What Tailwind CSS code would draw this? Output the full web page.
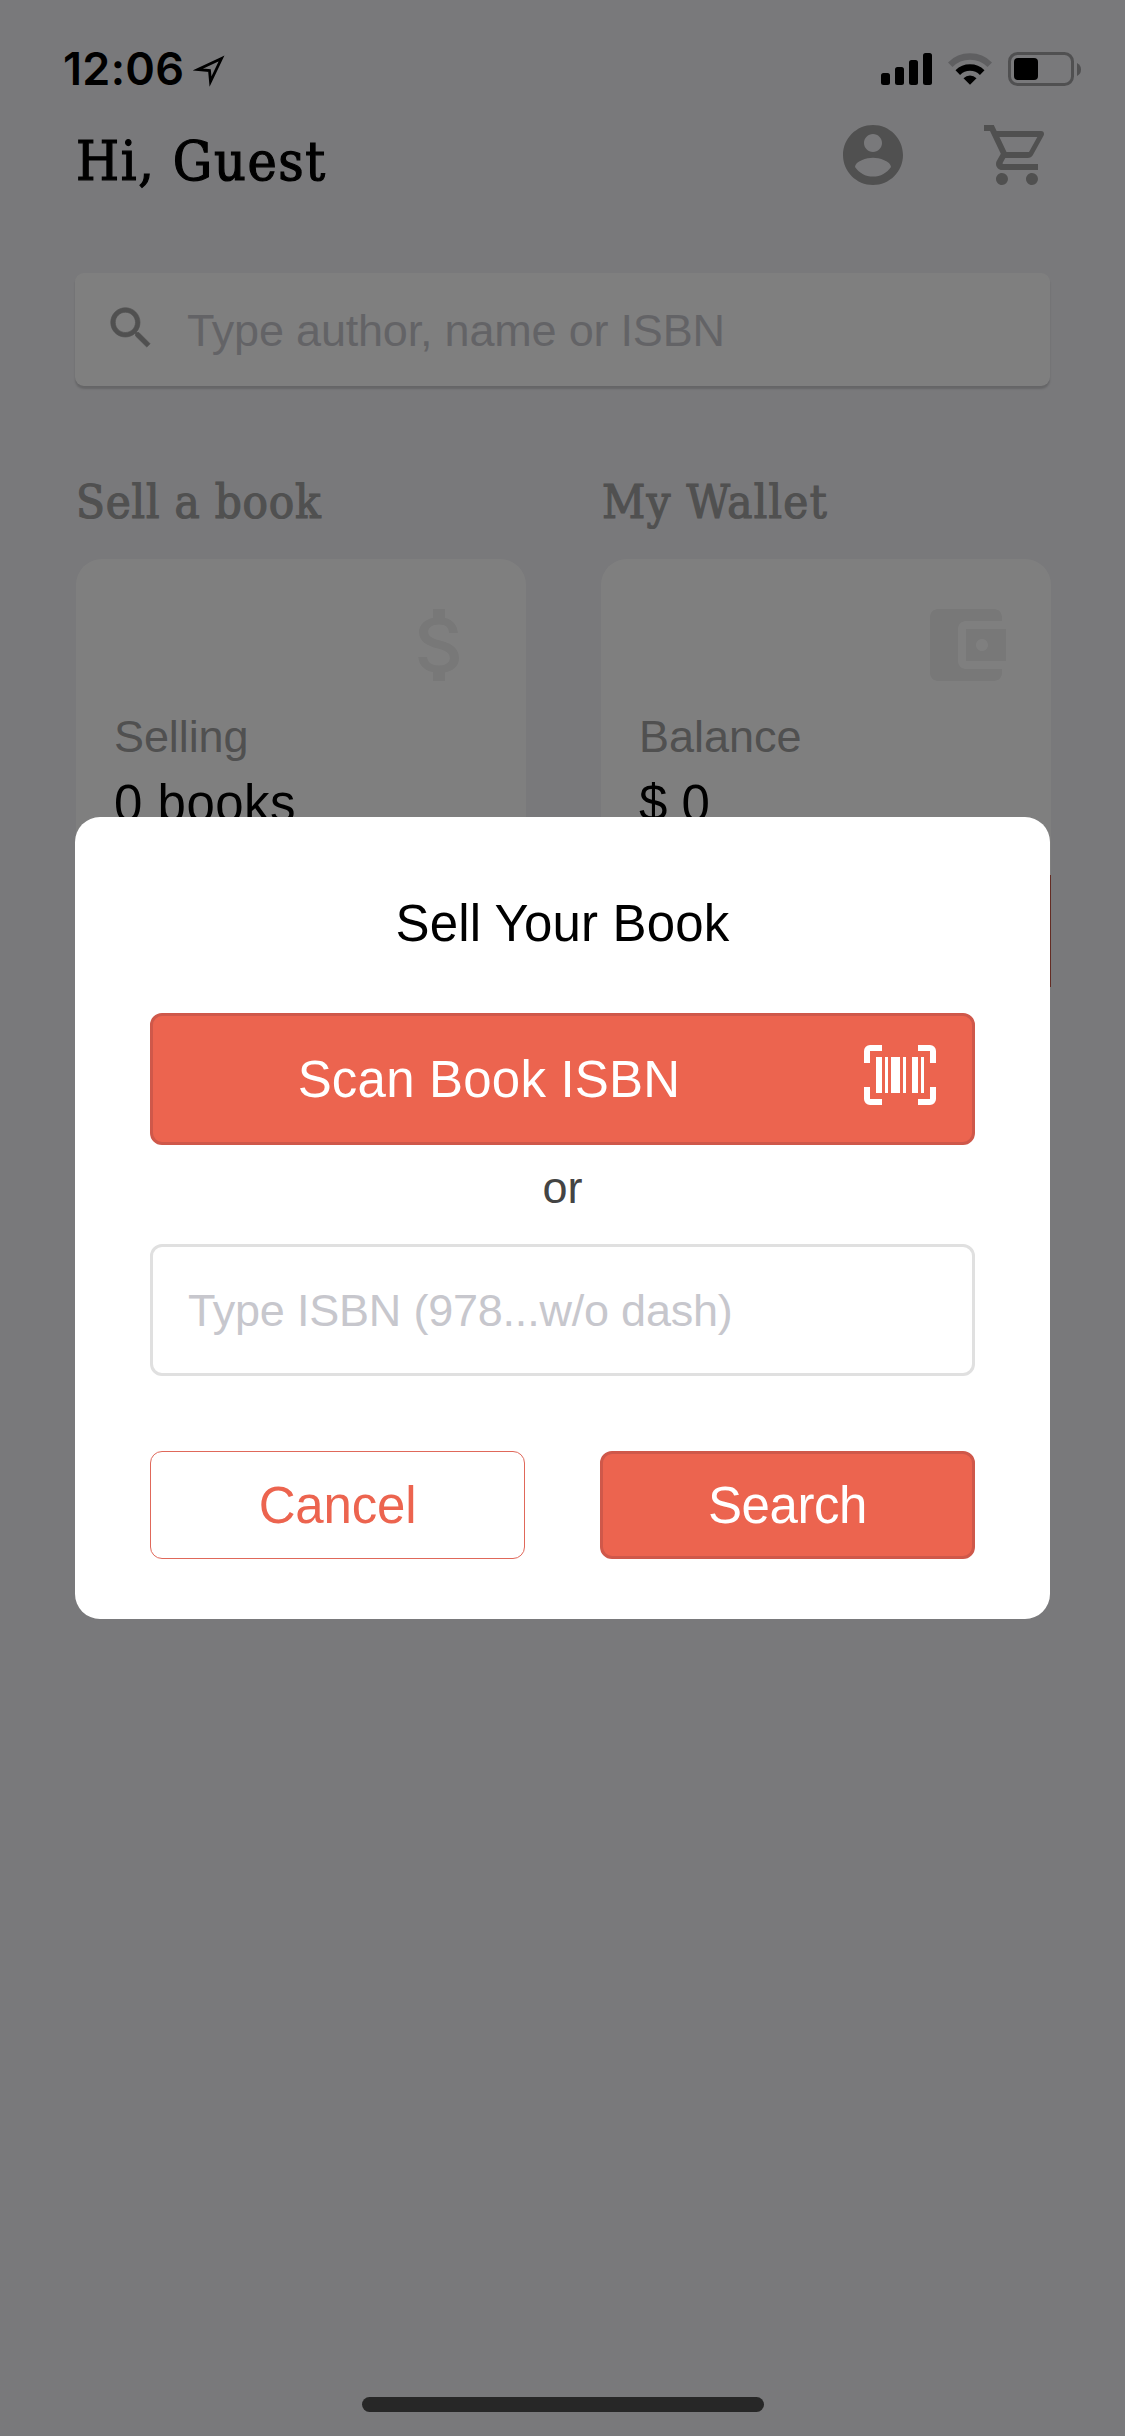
<!DOCTYPE html>
<html lang="en">
<head>
<meta charset="utf-8">
<title>Sell Your Book</title>
<script src="https://cdn.jsdelivr.net/npm/@tailwindcss/browser@4"></script>
</head>
<body class="w-[1125px] h-[2436px] overflow-hidden">
<div class="relative w-[1125px] h-[2436px] overflow-hidden bg-[#f2f2f6] font-['Liberation_Sans',sans-serif] text-black">

  <!-- Home screen -->
  <div class="flex h-full flex-col">
    <div class="flex h-[119px] items-start justify-between pl-[63px] pr-[44px] pt-[49px]">
      <div class="flex items-center gap-[9px]">
        <span class="font-['Inter',sans-serif] text-[45px] leading-[40px] font-semibold tracking-[0.3px]">12:06</span>
        <svg class="mt-[4px] h-[34px] w-[34px]" viewBox="0 0 34 34" fill="none" stroke="black" stroke-width="2.800"><path d="M28.5 4.500 L5 15.500 L16.500 16.500 L17.500 27.500 Z" stroke-miterlimit="6"/></svg>
      </div>
      <div class="flex items-start pt-[3px]">
        <svg class="mt-[1px] h-[33px] w-[51px]" viewBox="0 0 51 33"><rect x="0" y="20" width="9" height="12" rx="2.5"/><rect x="14" y="14" width="9" height="18" rx="2.5"/><rect x="28" y="7" width="9" height="25" rx="2.5"/><rect x="42" y="0" width="9" height="32" rx="2.5"/></svg>
        <svg class="ml-[16px] h-[34px] w-[44px]" viewBox="0 0 44 34" fill="none"><path d="M2.2 12.8 A28 28 0 0 1 41.8 12.8" stroke="#bebec2" stroke-width="6.5"/><path d="M9.8 20.6 A17.3 17.3 0 0 1 34.2 20.6" stroke="black" stroke-width="6.5"/><path d="M15.5 26.3 A9.2 9.2 0 0 1 28.5 26.3 L22 32.8Z" fill="black"/></svg>
        <svg class="ml-[16px] h-[34px] w-[73px]" viewBox="0 0 73 34"><rect x="1.5" y="1.5" width="63" height="31" rx="8" fill="none" stroke="#a0a0a3" stroke-width="3"/><rect x="6" y="6" width="24" height="22" rx="4"/><path d="M69 11 Q73 13 73 17.500 Q73 22 69 24Z" fill="#a0a0a3"/></svg>
      </div>
    </div>

    <div class="flex h-[84px] items-start justify-between pl-[76px] pr-[72px]">
      <h1 class="font-['DejaVu_Serif_Condensed','DejaVu_Serif',serif] text-[55px] leading-[84px] tracking-[1.6px] [-webkit-text-stroke:1.2px_black]">Hi, Guest</h1>
      <div class="flex gap-[72px] text-[#a0a0a0]">
        <svg class="size-[72px]" viewBox="0 0 24 24" fill="currentColor"><path d="M12 2C6.48 2 2 6.48 2 12s4.48 10 10 10 10-4.480 10-10S17.520 2 12 2zm0 3c1.660 0 3 1.340 3 3s-1.340 3-3 3-3-1.340-3-3 1.340-3 3-3zm0 14.200c-2.500 0-4.710-1.280-6-3.220.03-1.990 4-3.080 6-3.080 1.990 0 5.970 1.090 6 3.080-1.290 1.940-3.500 3.220-6 3.220z"/></svg>
        <svg class="size-[72px]" viewBox="0 0 24 24" fill="currentColor"><path d="M17,18A2,2 0 0,1 19,20A2,2 0 0,1 17,22C15.89,22 15,21.1 15,20C15,18.89 15.89,18 17,18M1,2H4.27L5.21,4H20A1,1 0 0,1 21,5C21,5.17 20.95,5.34 20.88,5.5L17.3,11.97C16.96,12.58 16.3,13 15.55,13H8.1L7.2,14.63L7.17,14.75A0.25,0.25 0 0,0 7.42,15H19V17H7C5.89,17 5,16.1 5,15C5,14.65 5.09,14.32 5.24,14.04L6.6,11.59L3,4H1V2M7,18A2,2 0 0,1 9,20A2,2 0 0,1 7,22C5.89,22 5,21.1 5,20C5,18.89 5.89,18 7,18M16,11L18.78,6H6.14L8.5,11H16Z"/></svg>
      </div>
    </div>

    <div class="mx-[75px] mt-[70px] flex h-[113px] items-center gap-[29px] rounded-[9px] bg-white pl-[29px] shadow-[0_3px_2px_rgba(0,0,0,0.16)]">
      <svg class="-mt-[4px] size-[54px]" viewBox="0 0 24 24" fill="#a0a0a0" stroke="#a0a0a0" stroke-width="0.3"><path d="M15.500 14h-.79l-.28-.27C15.410 12.590 16 11.110 16 9.500 16 5.910 13.090 3 9.500 3S3 5.910 3 9.500 5.910 16 9.500 16c1.610 0 3.090-.59 4.230-1.570l.27.28v.79l5 4.990L20.490 19l-4.990-5zm-6 0C7.010 14 5 11.990 5 9.500S7.010 5 9.500 5 14 7.010 14 9.500 11.990 14 9.500 14z"/></svg>
      <span class="mt-[2px] text-[45px] leading-[60px] tracking-[-0.2px] text-[#c7c7cd]">Type author, name or ISBN</span>
    </div>

    <div class="mt-[86px] grid grid-cols-2 gap-x-[75px] pl-[76px] pr-[74px]">
      <section>
        <h2 class="font-['DejaVu_Serif_Condensed','DejaVu_Serif',serif] text-[47px] leading-[60px] tracking-[0.8px] text-[#a0a0a0] [-webkit-text-stroke:1.2px_#a0a0a0]">Sell a book</h2>
        <div class="mt-[27px] h-[428px] overflow-hidden rounded-[26px] bg-white px-[37px] pt-[38px]">
          <svg class="ml-auto size-[96px]" viewBox="0 0 24 24" fill="#f0f0f0"><path d="M11.800 10.900c-2.270-.59-3-1.200-3-2.150 0-1.090 1.010-1.850 2.700-1.850 1.780 0 2.440.85 2.500 2.100h2.210c-.07-1.720-1.120-3.300-3.210-3.810V3h-3v2.160c-1.940.42-3.500 1.680-3.500 3.610 0 2.310 1.910 3.460 4.700 4.130 2.500.6 3 1.480 3 2.410 0 .69-.49 1.790-2.700 1.790-2.060 0-2.870-.92-2.980-2.100h-2.200c.12 2.190 1.760 3.420 3.680 3.830V21h3v-2.150c1.950-.37 3.500-1.500 3.500-3.550 0-2.840-2.430-3.810-4.700-4.400z"/></svg>
          <p class="mt-[17px] pl-px text-[45px] leading-[54px] tracking-[-0.1px] text-[#a0a0a0]">Selling</p>
          <p class="mt-[10px] pl-px text-[51px] leading-[60px] tracking-[0.5px]">0 books</p>
        </div>
      </section>
      <section>
        <h2 class="pl-px font-['DejaVu_Serif_Condensed','DejaVu_Serif',serif] text-[47px] leading-[60px] tracking-[1.3px] text-[#a0a0a0] [-webkit-text-stroke:1.2px_#a0a0a0]">My Wallet</h2>
        <div class="mt-[27px] h-[428px] overflow-hidden rounded-t-[26px] bg-white px-[37px] pt-[38px]">
          <svg class="ml-auto size-[96px]" viewBox="0 0 24 24" fill="#f0f0f0"><path d="M21 18v1c0 1.100-.9 2-2 2H5c-1.110 0-2-.9-2-2V5c0-1.100.89-2 2-2h14c1.100 0 2 .9 2 2v1h-9c-1.110 0-2 .9-2 2v8c0 1.100.89 2 2 2h9zm-9-2h10V8H12v8zm4-2.500c-.83 0-1.500-.67-1.500-1.500s.67-1.500 1.500-1.500 1.500.67 1.500 1.500-.67 1.500-1.500 1.500z"/></svg>
          <p class="mt-[17px] pl-px text-[45px] leading-[54px] text-[#a0a0a0]">Balance</p>
          <p class="mt-[10px] pl-px text-[51px] leading-[60px]">$ 0</p>
          <div class="-mx-[37px] mt-[41px] h-[112px] bg-[#c95849]"></div>
        </div>
      </section>
    </div>

    <div class="mx-auto mt-auto mb-[24px] h-[15px] w-[402px] rounded-full bg-[#4e4e4e]"></div>
  </div>

  <!-- Dialog over a dimmed backdrop -->
  <div class="absolute inset-0 flex items-center justify-center bg-black/50">
    <div class="flex w-[975px] flex-col rounded-[25px] bg-white px-[75px] pt-[77px] pb-[60px]">
      <h2 class="text-center text-[51px] leading-[60px] tracking-[0.15px]">Sell Your Book</h2>
      <button class="mt-[59px] flex h-[132px] items-center rounded-[12px] border-[3px] border-[#cf584a] bg-[#ec644f] pr-[36px] text-white">
        <span class="mr-[39px] flex-1 pt-[2px] text-center text-[51px] leading-[60px] tracking-[0.2px]">Scan Book ISBN</span>
        <svg class="-mt-[8px] size-[72px]" viewBox="0 0 24 24" fill="currentColor"><path d="M4,6H6V18H4V6M7,6H8V18H7V6M9,6H12V18H9V6M13,6H14V18H13V6M16,6H18V18H16V6M19,6H20V18H19V6M2,4V8H0V4A2,2 0 0,1 2,2H6V4H2M22,2A2,2 0 0,1 24,4V8H22V4H18V2H22M2,16V20H6V22H2A2,2 0 0,1 0,20V16H2M22,20V16H24V20A2,2 0 0,1 22,22H18V20H22Z"/></svg>
      </button>
      <p class="mt-[13px] text-center text-[45px] leading-[60px] text-[#444]">or</p>
      <div class="mt-[26px] flex h-[132px] items-center rounded-[12px] border-[3px] border-[#e0e0e0] pt-[2px] pl-[35px] text-[45px] leading-[60px] tracking-[-0.22px] text-[#c7c7cd]">Type ISBN (978...w/o dash)</div>
      <div class="mt-[75px] grid grid-cols-2 gap-[75px] text-[51px] leading-[60px] tracking-[-0.2px]">
        <button class="h-[108px] rounded-[12px] border border-[#e0685a] pt-[2px] text-[#ec644f]">Cancel</button>
        <button class="h-[108px] rounded-[12px] border-[3px] border-[#cf584a] bg-[#ec644f] pt-[2px] tracking-[-0.4px] text-white">Search</button>
      </div>
    </div>
  </div>
</div>
</body>
</html>
